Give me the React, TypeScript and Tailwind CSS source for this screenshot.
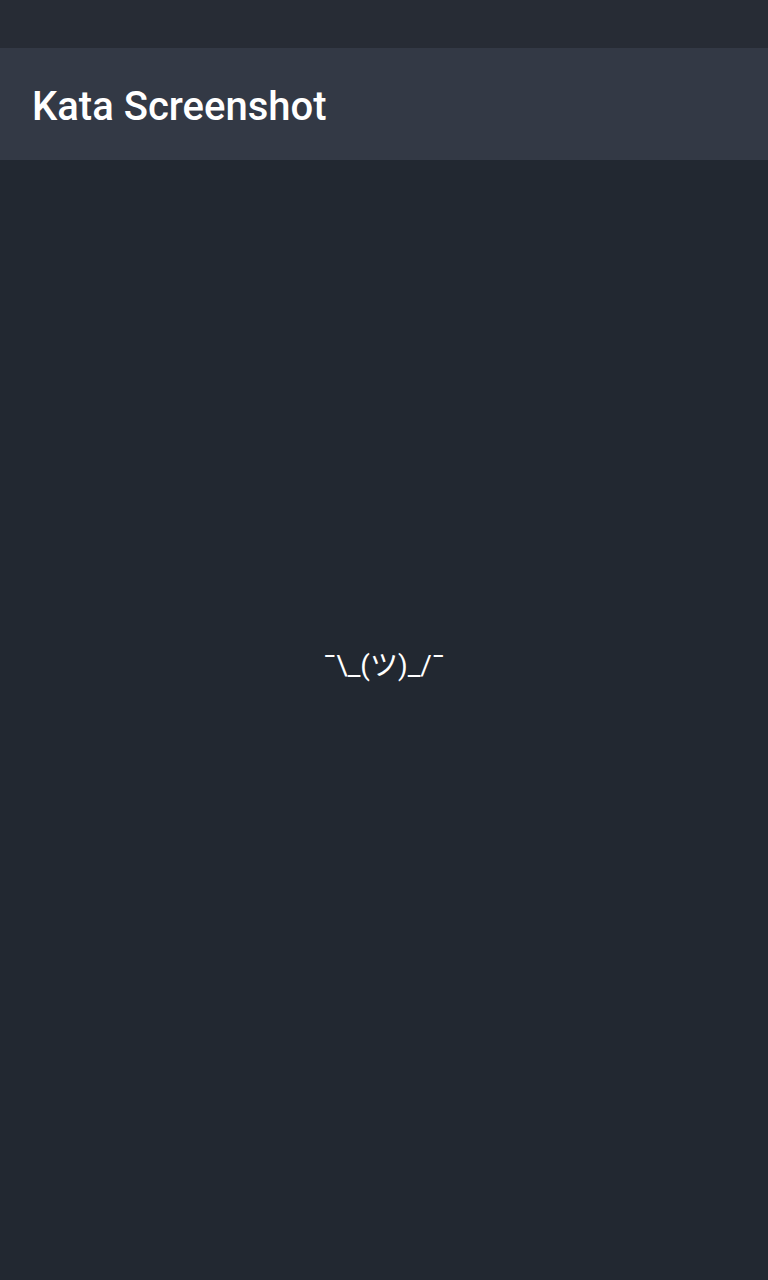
import React from "react";

export default function App() {
    return (
        <div className="flex flex-col h-[1280px] w-full bg-[#222831] font-['Roboto','Noto_Sans_CJK_JP',sans-serif] text-white">
            <div className="h-12 bg-[#272c35]" />
            <div className="h-28 bg-[#333945] flex items-center px-8 pt-[6px]">
                <h1 className="text-[40px] font-medium leading-none">Kata Screenshot</h1>
            </div>
            <div className="flex-1 flex items-center justify-center pb-[108px]">
                <span className="text-[28px]">¯\_(ツ)_/¯</span>
            </div>
        </div>
    );
}
